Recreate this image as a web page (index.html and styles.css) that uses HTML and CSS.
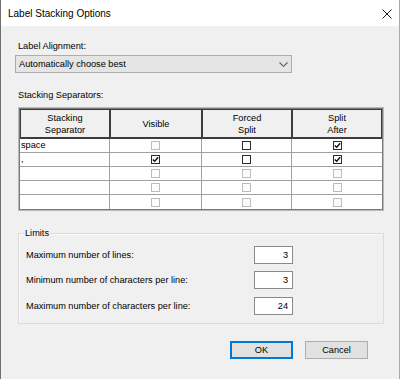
FILE: index.html
```html
<!DOCTYPE html>
<html>
<head>
<meta charset="utf-8">
<link rel="stylesheet" href="styles.css">
</head>
<body>
<div class="window">
  <div class="titlebar">
    <span class="title">Label Stacking Options</span>
    <svg class="close" width="10" height="10" viewBox="0 0 10 10"><path d="M0.5 0.5 L9.5 9.5 M9.5 0.5 L0.5 9.5"/></svg>
  </div>
  <div class="content">
    <div class="label lbl-align">Label Alignment:</div>
    <div class="select">
      <span class="select-text">Automatically choose best</span>
      <svg class="chev" width="9" height="5" viewBox="0 0 9 5"><path d="M0.5 0.5 L4.5 4.3 L8.5 0.5"/></svg>
    </div>
    <div class="label lbl-sep">Stacking Separators:</div>
    <div class="grid-wrap">
      <div class="grid">
        <div class="hcell">Stacking<br>Separator</div>
        <div class="hcell">Visible</div>
        <div class="hcell">Forced<br>Split</div>
        <div class="hcell">Split<br>After</div>

        <div class="cell text">space</div>
        <div class="cell"><span class="cb disabled"></span></div>
        <div class="cell"><span class="cb"></span></div>
        <div class="cell"><span class="cb"><svg viewBox="0 0 7 7"><path d="M0.8 3.4 L2.7 5.3 L6.2 1.2"/></svg></span></div>

        <div class="cell text">,</div>
        <div class="cell"><span class="cb"><svg viewBox="0 0 7 7"><path d="M0.8 3.4 L2.7 5.3 L6.2 1.2"/></svg></span></div>
        <div class="cell"><span class="cb"></span></div>
        <div class="cell"><span class="cb"><svg viewBox="0 0 7 7"><path d="M0.8 3.4 L2.7 5.3 L6.2 1.2"/></svg></span></div>

        <div class="cell text"></div>
        <div class="cell"><span class="cb disabled"></span></div>
        <div class="cell"><span class="cb disabled"></span></div>
        <div class="cell"><span class="cb disabled"></span></div>

        <div class="cell text"></div>
        <div class="cell"><span class="cb disabled"></span></div>
        <div class="cell"><span class="cb disabled"></span></div>
        <div class="cell"><span class="cb disabled"></span></div>

        <div class="cell text last"></div>
        <div class="cell last"><span class="cb disabled"></span></div>
        <div class="cell last"><span class="cb disabled"></span></div>
        <div class="cell last"><span class="cb disabled"></span></div>
      </div>
    </div>
    <fieldset class="limits">
      <legend>Limits</legend>
      <div class="limit-row r1"><span class="label">Maximum number of lines:</span><span class="num">3</span></div>
      <div class="limit-row r2"><span class="label">Minimum number of characters per line:</span><span class="num">3</span></div>
      <div class="limit-row r3"><span class="label">Maximum number of characters per line:</span><span class="num">24</span></div>
    </fieldset>
    <div class="buttons">
      <div class="btn default">OK</div>
      <div class="btn">Cancel</div>
    </div>
  </div>
</div>
</body>
</html>
```

FILE: styles.css
```css
* { box-sizing: border-box; }
html, body { margin: 0; padding: 0; }
body {
  width: 400px;
  height: 379px;
  overflow: hidden;
  font-family: "Liberation Sans", Arial, sans-serif;
  font-size: 9.2px;
  color: #000;
  background: #f0f0f0;
}
.window {
  width: 400px;
  height: 379px;
  border-left: 1px solid #6f6f6f;
  border-right: 1px solid #a8a8a8;
  background: #f0f0f0;
  display: flex;
  flex-direction: column;
}
.titlebar {
  height: 26px;
  background: #fff;
  display: flex;
  align-items: center;
  justify-content: space-between;
  padding: 0 7px 0 7px;
}
.title {
  font-size: 10px;
  line-height: 12px;
  margin-top: 1px;
}
.close {
  margin-top: 1px;
}
.close path {
  stroke: #1a1a1a;
  stroke-width: 1;
  fill: none;
}
.content {
  padding: 0 0 0 17px;
  display: flex;
  flex-direction: column;
  align-items: flex-start;
}
.label {
  line-height: 12px;
  white-space: nowrap;
}
.lbl-align { margin-top: 14px; }
.select {
  margin-top: 3px;
  margin-left: -3px;
  width: 277px;
  height: 18px;
  background: #e5e5e5;
  border: 1px solid #adadad;
  display: flex;
  align-items: center;
  justify-content: space-between;
  padding: 0 2px 0 3px;
}
.select-text {
  line-height: 16px;
}
.chev path {
  stroke: #606060;
  stroke-width: 1.1;
  fill: none;
}
.chev { margin-right: 1px; margin-top: 1px; }
.lbl-sep { margin-top: 16px; }

.grid-wrap {
  margin-top: 6px;
  border: 1px solid #b9b9b9;
}
.grid {
  border: 1px solid #7a7a7a;
  display: grid;
  grid-template-columns: 90px 92px 90px 90px;
  grid-template-rows: 30px repeat(5, 14px);
  background: #fff;
}
.hcell {
  background: #f0f0f0;
  border: 1px solid #3c3c3c;
  border-bottom-width: 2px;
  display: flex;
  align-items: center;
  justify-content: center;
  text-align: center;
  line-height: 12.5px;
  padding-top: 1px;
}
.cell {
  border-right: 1px solid #a0a0a0;
  border-bottom: 1px solid #a0a0a0;
  display: flex;
  align-items: center;
  justify-content: center;
  background: #fff;
}
.cell.last { border-bottom: none; }
.cell:nth-child(4n) { border-right: none; }
.cell.text {
  justify-content: flex-start;
  padding-left: 1px;
  line-height: 13px;
}
.cb {
  width: 9px;
  height: 9px;
  border: 1px solid #2b2b2b;
  background: #fff;
  display: flex;
  align-items: center;
  justify-content: center;
}
.cb.disabled {
  border-color: #bcbcbc;
  background: #fcfcfc;
}
.cb svg {
  width: 7px;
  height: 7px;
  display: block;
}
.cb path {
  stroke: #111;
  stroke-width: 1.4;
  fill: none;
}

.limits {
  margin: 16px 0 0 0;
  padding: 7px 0 8px 7px;
  width: 366px;
  border: 1px solid #dcdcdc;
  box-shadow: inset 1px 1px 0 #fafafa;
  min-width: 0;
  display: flex;
  flex-direction: column;
}
.limits legend {
  padding: 0 1px;
  margin-left: -2px;
  line-height: 12px;
}
.limit-row {
  display: grid;
  grid-template-columns: 228px 39px;
  align-items: center;
  height: 18px;
}
.r2 { margin-top: 7px; }
.r3 { margin-top: 8px; }
.num {
  height: 18px;
  border: 1px solid #8a8a8a;
  background: #fff;
  text-align: right;
  padding-right: 4px;
  line-height: 16px;
}
.buttons {
  margin-top: 17px;
  align-self: stretch;
  display: flex;
  justify-content: flex-end;
  gap: 12px;
  padding-right: 31px;
}
.btn {
  width: 63px;
  height: 18px;
  background: #e1e1e1;
  border: 1px solid #adadad;
  text-align: center;
  line-height: 16px;
}
.btn.default {
  border-color: #0078d7;
  box-shadow: inset 0 0 0 1px #0078d7;
}
```
